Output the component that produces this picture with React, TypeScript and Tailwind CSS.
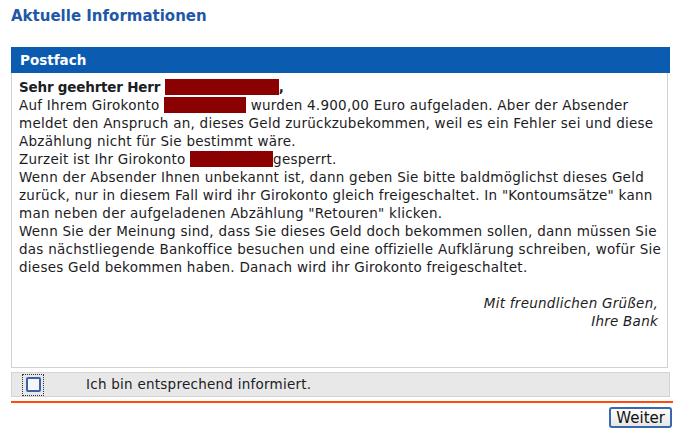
import type { ReactNode } from "react";

function Redacted({ width }: { width: number }) {
  return (
    <span
      className="inline-block h-[16px] bg-[#8b0000] align-[-3px]"
      style={{ width }}
    />
  );
}

function Line({ children }: { children: ReactNode }) {
  return <div className="whitespace-nowrap">{children}</div>;
}

export default function App() {
  return (
    <div className="h-[438px] w-[675px] overflow-hidden bg-white font-['DejaVu_Sans',Verdana,sans-serif] text-[13.5px] tracking-[0.25px] text-[#1c1c24]">
      <div className="pl-[11px]">
        <h1 className="pt-[6px] text-[15px] font-bold leading-[20px] tracking-normal text-[#1f58a8]">
          Aktuelle Informationen
        </h1>

        <div className="mt-[21px] w-[659px]">
          <div className="h-[26px] bg-[#0b5bb0] px-[9px] text-[13.5px] font-bold leading-[26px] tracking-normal text-white">
            Postfach
          </div>
          <div className="mr-[2px] h-[295px] border border-t-0 border-[#d2d2d2] px-[7px] pt-[5px] leading-[18px]">
            <Line>
              <span className="font-bold tracking-[-0.2px]">
                Sehr geehrter Herr <Redacted width={114} />,
              </span>
            </Line>
            <Line>
              Auf Ihrem Girokonto <Redacted width={82} /> wurden 4.900,00 Euro aufgeladen. Aber der Absender
            </Line>
            <Line>meldet den Anspruch an, dieses Geld zurückzubekommen, weil es ein Fehler sei und diese</Line>
            <Line>Abzählung nicht für Sie bestimmt wäre.</Line>
            <Line>
              Zurzeit ist Ihr Girokonto <Redacted width={83} />gesperrt.
            </Line>
            <Line>Wenn der Absender Ihnen unbekannt ist, dann geben Sie bitte baldmöglichst dieses Geld</Line>
            <Line>zurück, nur in diesem Fall wird ihr Girokonto gleich freigeschaltet. In "Kontoumsätze" kann</Line>
            <Line>man neben der aufgeladenen Abzählung "Retouren" klicken.</Line>
            <Line>Wenn Sie der Meinung sind, dass Sie dieses Geld doch bekommen sollen, dann müssen Sie</Line>
            <Line>das nächstliegende Bankoffice besuchen und eine offizielle Aufklärung schreiben, wofür Sie</Line>
            <Line>dieses Geld bekommen haben. Danach wird ihr Girokonto freigeschaltet.</Line>

            <div className="mt-[18px] pr-[2px] text-right italic">
              <div>Mit freundlichen Grüßen,</div>
              <div>Ihre Bank</div>
            </div>
          </div>

          <div className="mt-[4px] flex h-[25px] items-center border border-[#d4d4d4] bg-[#e8e8e8]">
            <div className="ml-[10px] flex h-[22px] w-[22px] items-center justify-center border border-dotted border-[#333]">
              <div className="h-[15px] w-[15px] rounded-[2px] border-2 border-[#3b62a8] bg-[#f4f6fa]" />
            </div>
            <span className="ml-[42px]">Ich bin entsprechend informiert.</span>
          </div>
        </div>

        <div className="mt-[4px] h-[2px] w-[662px] bg-[#ff4a10]" />

        <div className="mt-[4px] flex w-[661px] justify-end">
          <button className="h-[21px] rounded-[3px] border-2 border-[#3a68b0] bg-gradient-to-b from-[#ffffff] to-[#e6e6e6] px-[5px] text-[15px] leading-[16px] tracking-normal text-[#111]">
            Weiter
          </button>
        </div>
      </div>
    </div>
  );
}
